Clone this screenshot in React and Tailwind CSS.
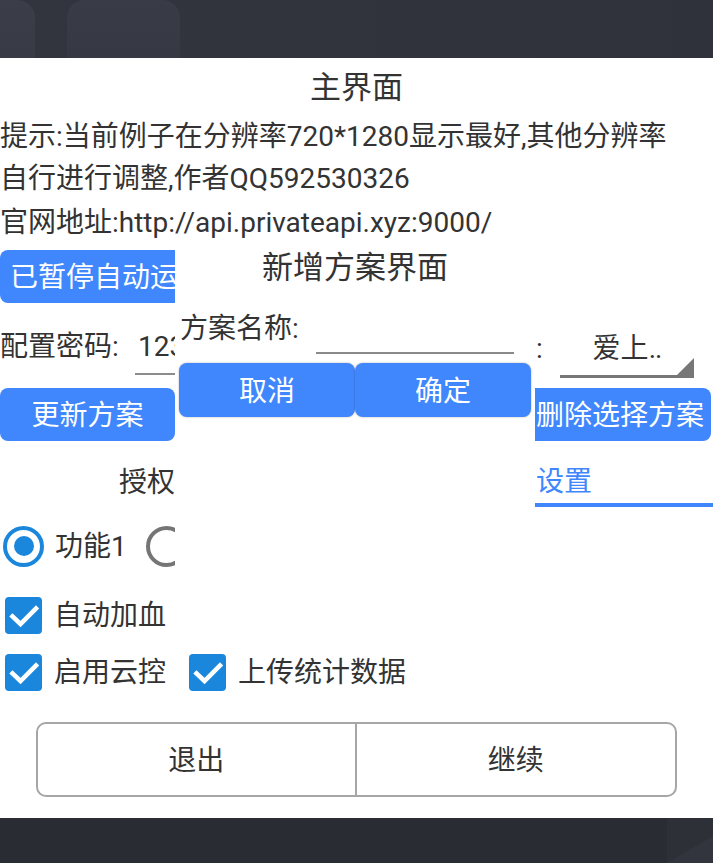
import React from "react";

function Check() {
  return (
    <div className="flex h-[37px] w-[37px] shrink-0 items-center justify-center rounded-[4px] bg-[#1a87dc]">
      <svg width="37" height="37" viewBox="0 0 37 37">
        <path d="M7.5 19.5 L15.5 27 L31 11.5" fill="none" stroke="#ffffff" strokeWidth="4.5" strokeLinecap="square" />
      </svg>
    </div>
  );
}

function Radio({ on }) {
  return (
    <div
      className={
        on
          ? "flex h-[41px] w-[41px] shrink-0 items-center justify-center rounded-full border-[4px] border-[#1a87dc]"
          : "flex h-[41px] w-[41px] shrink-0 items-center justify-center rounded-full border-[4px] border-[#757575]"
      }
    >
      {on ? <div className="h-[20px] w-[20px] rounded-full bg-[#1a87dc]" /> : null}
    </div>
  );
}

export default function App() {
  return (
    <div className="flex h-[863px] w-[713px] flex-col overflow-hidden bg-[#2f323a] font-[Roboto,'Noto_Sans_CJK_SC',sans-serif] text-[#333333]">
      {/* top backdrop */}
      <div className="flex h-[58px] shrink-0 items-stretch bg-gradient-to-r from-[#32353e] to-[#2f323a]">
        <div className="w-[35px] rounded-tr-[18px] bg-gradient-to-b from-[#3b3e49] to-[#383b45]" />
        <div className="ml-[32px] w-[113px] rounded-t-[18px] bg-gradient-to-b from-[#393c47] to-[#363943]" />
      </div>

      {/* dialog */}
      <div className="flex h-[760px] shrink-0 flex-col bg-white">
        <div className="pt-[13px] text-center text-[31px] leading-[34px]">主界面</div>
        <div className="mt-[11px] whitespace-nowrap text-[28px] leading-[42px]">
          提示:当前例子在分辨率720*1280显示最好,其他分辨率
          <br />
          自行进行调整,作者QQ592530326
        </div>
        <div className="mt-[2px] whitespace-nowrap text-[28px] leading-[42px]">官网地址:http://api.privateapi.xyz:9000/</div>

        <div className="mt-[6px] grid grid-cols-[175px_360px_178px] grid-rows-[53px_85px_53px_66px_78px] text-[28px]">
          {/* column 1 */}
          <div className="col-start-1 row-start-1 overflow-hidden">
            <div className="flex h-[53px] w-[237px] items-center whitespace-nowrap rounded-l-[8px] bg-[#4087fd] pl-[10px] pt-[3px] text-white">
              已暂停自动运行
            </div>
          </div>
          <div className="col-start-1 row-start-2 flex overflow-hidden pt-[24px]">
            <span className="w-[135px] shrink-0 whitespace-nowrap leading-[40px]">配置密码:</span>
            <div className="h-[48px] w-[120px] shrink-0 border-b-2 border-[#8c8c8c] pl-[3px] leading-[40px]">123456</div>
          </div>
          <div className="col-start-1 row-start-3">
            <div className="flex h-[53px] w-full items-center justify-center rounded-[8px] bg-[#4087fd] pt-[3px] text-white">更新方案</div>
          </div>
          <div className="col-start-1 row-start-4 flex h-[50px] items-center justify-end self-end overflow-hidden pt-[2px] leading-[46px]">
            授权
          </div>
          <div className="col-start-1 row-start-5 flex items-center overflow-hidden">
            <div className="ml-[3px]">
              <Radio on />
            </div>
            <span className="ml-[11px] whitespace-nowrap pt-[2px]">功能1</span>
            <div className="ml-[19px]">
              <Radio />
            </div>
          </div>

          {/* overlay panel: 新增方案界面 */}
          <div className="z-10 col-start-2 row-span-5 row-start-1 bg-white">
            <div className="pt-[1px] text-center text-[31px] leading-[34px]">新增方案界面</div>
            <div className="mt-[24px] flex pl-[5px]">
              <span className="whitespace-nowrap leading-[40px]">方案名称:</span>
              <div className="ml-[17px] h-[45px] w-[198px] border-b-2 border-[#8a8a8a]" />
            </div>
            <div className="mt-[9px] flex pl-[4px]">
              <div className="flex h-[54px] w-[176px] items-center justify-center rounded-[8px] bg-[#4087fd] pt-[3px] text-white shadow-[0_0_2px_rgba(0,0,0,0.35)]">
                取消
              </div>
              <div className="flex h-[54px] w-[176px] items-center justify-center rounded-[8px] bg-[#4087fd] pt-[3px] text-white shadow-[0_0_2px_rgba(0,0,0,0.35)]">
                确定
              </div>
            </div>
          </div>

          {/* column 3 */}
          <div className="col-start-3 row-start-2 flex pt-[22px]">
            <span className="w-[25px] pl-[1px] pt-[2px] leading-[44px]">:</span>
            <div className="relative h-[53px] w-[134px] border-b-[3px] border-[#777777] pt-[2px] text-center leading-[44px]">
              <span>爱上</span>
              <span className="tracking-[-1px]">..</span>
              <svg className="absolute bottom-0 right-0" width="17" height="17" viewBox="0 0 17 17">
                <polygon points="17,0 17,17 0,17" fill="#777777" />
              </svg>
            </div>
          </div>
          <div className="col-start-3 row-start-3">
            <div className="flex h-[53px] w-[176px] items-center whitespace-nowrap rounded-r-[8px] bg-[#4087fd] pl-[1px] pt-[3px] text-white">
              删除选择方案
            </div>
          </div>
          <div className="col-start-3 row-start-4 flex h-[50px] items-center self-end border-b-4 border-[#4087fd] pl-[1px] pt-[4px] text-[#4087fd]">
            设置
          </div>
        </div>

        {/* check rows */}
        <div className="flex h-[60px] items-center pl-[5px] text-[28px]">
          <Check />
          <span className="ml-[12px] pt-[2px]">自动加血</span>
        </div>
        <div className="flex h-[54px] items-center pl-[5px] text-[28px]">
          <Check />
          <span className="ml-[12px] pt-[2px]">启用云控</span>
          <div className="ml-[23px]">
            <Check />
          </div>
          <span className="ml-[12px] pt-[2px]">上传统计数据</span>
        </div>

        {/* bottom buttons */}
        <div className="mx-[36px] mt-[23px] grid h-[75px] grid-cols-2 rounded-[10px] border-2 border-[#a6a6a6] text-[28px]">
          <div className="flex items-center justify-center border-r-2 border-[#a6a6a6] pt-[3px]">退出</div>
          <div className="flex items-center justify-center pt-[3px]">继续</div>
        </div>
      </div>

      {/* bottom backdrop */}
      <div className="flex flex-1 justify-end bg-[#2a2c34]">
        <div className="w-[46px] bg-[#2e3038]">
          <svg width="46" height="45" viewBox="0 0 46 45">
            <polygon points="0,45 46,18 46,45" fill="#33353e" />
          </svg>
        </div>
      </div>
    </div>
  );
}
